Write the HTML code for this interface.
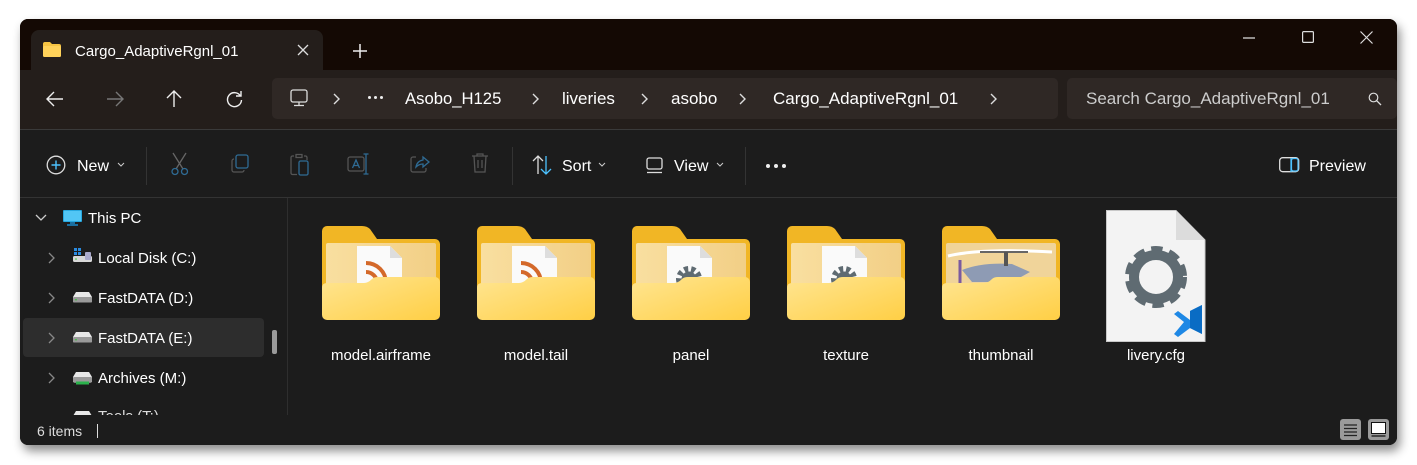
<!DOCTYPE html>
<html><head><meta charset="utf-8"><style>
*{margin:0;padding:0;box-sizing:border-box}
body{width:1417px;height:465px;background:#fff;position:relative;overflow:hidden;font-family:"Segoe UI","Liberation Sans",sans-serif;color:#fff}
.a{position:absolute}
.win{left:20px;top:19px;width:1377px;height:426px;background:#1c1c1c;border-radius:8px;overflow:hidden;box-shadow:3px 6px 10px rgba(0,0,0,.45)}
.t{font-size:16px;white-space:nowrap}
.sb{font-size:15px}
.lbl{font-size:15px;color:#fff;width:150px;text-align:center}
svg{display:block}
.dot{position:absolute;width:4px;height:4px;border-radius:2px;background:#eee}
</style></head><body>
<div class="a win">
 <div class="a" style="left:0;top:0;width:1377px;height:51px;background:#140904"></div>
 <div class="a" style="left:11px;top:11px;width:292px;height:40px;background:#241e1b;border-radius:8px 8px 0 0"></div>
 <svg class="a" style="left:23px;top:23px" width="18" height="15"><path d="M0 2a2 2 0 0 1 2-2h5l2 2h7a2 2 0 0 1 2 2v9a2 2 0 0 1-2 2H2a2 2 0 0 1-2-2z" fill="#f6c443"/><rect x="0" y="4" width="18" height="11" rx="1.5" fill="#ffd25a"/></svg>
 <div class="a t" style="left:55px;top:24px;font-size:15px">Cargo_AdaptiveRgnl_01</div>
 <svg class="a" style="left:277px;top:25px" width="12" height="12"><path d="M1 1L11 11M11 1L1 11" stroke="#ddd" stroke-width="1.3"/></svg>
 <svg class="a" style="left:333px;top:25px" width="14" height="14"><path d="M7 0V14M0 7H14" stroke="#eee" stroke-width="1.5"/></svg>
 <svg class="a" style="left:1223px;top:18px" width="12" height="2"><path d="M0 1H12" stroke="#ddd" stroke-width="1.2"/></svg>
 <svg class="a" style="left:1282px;top:12px" width="12" height="12"><rect x=".6" y=".6" width="10.8" height="10.8" rx="1" fill="none" stroke="#ddd" stroke-width="1.2"/></svg>
 <svg class="a" style="left:1340px;top:12px" width="13" height="13"><path d="M.5 .5L12.5 12.5M12.5 .5L.5 12.5" stroke="#ddd" stroke-width="1.2"/></svg>
 <div class="a" style="left:0;top:51px;width:1377px;height:59px;background:#241e1b"></div>
 <svg class="a" style="left:26px;top:72px" width="18" height="16"><path d="M17 8H1M8 1L1 8L8 15" stroke="#eee" stroke-width="1.4" fill="none"/></svg>
 <svg class="a" style="left:86px;top:72px" width="18" height="16"><path d="M1 8H17M10 1L17 8L10 15" stroke="#777" stroke-width="1.4" fill="none"/></svg>
 <svg class="a" style="left:146px;top:71px" width="16" height="18"><path d="M8 17V1M1 8L8 1L15 8" stroke="#eee" stroke-width="1.4" fill="none"/></svg>
 <svg class="a" style="left:206px;top:71px" width="17" height="18"><path d="M14.5 6A7 7 0 1 0 15.5 10M15 1V6H10" stroke="#eee" stroke-width="1.4" fill="none"/></svg>
 <div class="a" style="left:252px;top:59px;width:786px;height:41px;background:#2f2825;border-radius:5px"></div>
 <svg class="a" style="left:270px;top:70px" width="18" height="18"><rect x="1" y="1" width="16" height="12" rx="2" fill="none" stroke="#ddd" stroke-width="1.3"/><path d="M9 13V16M4 16.5H14" stroke="#ddd" stroke-width="1.3"/></svg>
 <svg class="a" style="left:313px;top:74px" width="8" height="12"><path d="M1 1L6 6L1 11" stroke="#ddd" stroke-width="1.4" fill="none"/></svg>
 <div class="dot" style="left:348px;top:77px;width:3px;height:3px"></div><div class="dot" style="left:354px;top:77px;width:3px;height:3px"></div><div class="dot" style="left:360px;top:77px;width:3px;height:3px"></div>
 <div class="a t" style="left:385px;top:70px;font-size:17px;transform:scale(.98,1);transform-origin:left">Asobo_H125</div>
 <svg class="a" style="left:512px;top:74px" width="8" height="12"><path d="M1 1L6 6L1 11" stroke="#ddd" stroke-width="1.4" fill="none"/></svg>
 <div class="a t" style="left:542px;top:70px;font-size:17px">liveries</div>
 <svg class="a" style="left:621px;top:74px" width="8" height="12"><path d="M1 1L6 6L1 11" stroke="#ddd" stroke-width="1.4" fill="none"/></svg>
 <div class="a t" style="left:651px;top:70px;font-size:17px">asobo</div>
 <svg class="a" style="left:719px;top:74px" width="8" height="12"><path d="M1 1L6 6L1 11" stroke="#ddd" stroke-width="1.4" fill="none"/></svg>
 <div class="a t" style="left:753px;top:70px;font-size:17px">Cargo_AdaptiveRgnl_01</div>
 <svg class="a" style="left:970px;top:74px" width="8" height="12"><path d="M1 1L6 6L1 11" stroke="#ddd" stroke-width="1.4" fill="none"/></svg>
 <div class="a" style="left:1047px;top:59px;width:330px;height:41px;background:#2f2825;border-radius:5px"></div>
 <div class="a t" style="left:1066px;top:70px;color:#ccc;font-size:17px">Search Cargo_AdaptiveRgnl_01</div>
 <svg class="a" style="left:1348px;top:73px" width="14" height="14"><circle cx="5.5" cy="5.5" r="4.3" fill="none" stroke="#ddd" stroke-width="1.2"/><path d="M8.7 8.7L13 13" stroke="#ddd" stroke-width="1.3"/></svg>
 <div class="a" style="left:0;top:110px;width:1377px;height:1px;background:#3a3a3a"></div>
 <svg class="a" style="left:26px;top:136px" width="20" height="20"><circle cx="10" cy="10" r="8.8" fill="none" stroke="#ddd" stroke-width="1.3"/><path d="M10 5.5V14.5M5.5 10H14.5" stroke="#4cc2ff" stroke-width="1.4"/></svg>
 <div class="a t" style="left:57px;top:139px;font-size:16px">New</div>
 <svg class="a" style="left:97px;top:143px" width="8" height="5"><path d="M1 1L4 4L7 1" stroke="#ccc" stroke-width="1" fill="none"/></svg>
 <div class="a" style="left:126px;top:128px;width:1px;height:38px;background:#333"></div>
 <svg class="a" style="left:150px;top:133px" width="20" height="24"><path d="M3 1L13 17M16 1L6 17" stroke="#666" stroke-width="1.3"/><circle cx="5" cy="19.5" r="3" fill="none" stroke="#2f6b94" stroke-width="1.3"/><circle cx="14.5" cy="19.5" r="3" fill="none" stroke="#2f6b94" stroke-width="1.3"/></svg>
 <svg class="a" style="left:210px;top:135px" width="20" height="20"><rect x="6" y="1" width="12" height="13" rx="2" fill="none" stroke="#2f6b94" stroke-width="1.3"/><path d="M4 5A2 2 0 0 0 2 7V16A2 2 0 0 0 4 18H12A2 2 0 0 0 14 16" stroke="#555" stroke-width="1.3" fill="none"/></svg>
 <svg class="a" style="left:270px;top:134px" width="20" height="23"><path d="M4 3H2.5A1.5 1.5 0 0 0 1 4.5V20A1.5 1.5 0 0 0 2.5 21.5H7M14 3H15.5A1.5 1.5 0 0 1 17 4.5V7M6 1.5H12V4.5H6Z" stroke="#555" stroke-width="1.3" fill="none"/><rect x="9" y="8" width="9" height="14" rx="1.5" fill="none" stroke="#2f6b94" stroke-width="1.3"/></svg>
 <svg class="a" style="left:327px;top:134px" width="24" height="22"><rect x="1" y="4" width="16" height="14" rx="2" fill="none" stroke="#555" stroke-width="1.3"/><path d="M5.5 15L9 7L12.5 15M6.8 12.5H11.2" stroke="#2f6b94" stroke-width="1.3" fill="none"/><path d="M19 1V21M16.5 1H21.5M16.5 21H21.5" stroke="#2f6b94" stroke-width="1.3"/></svg>
 <svg class="a" style="left:389px;top:134px" width="22" height="21"><path d="M7 4H4A2 2 0 0 0 2 6V17A2 2 0 0 0 4 19H15A2 2 0 0 0 17 17V15" stroke="#555" stroke-width="1.3" fill="none"/><path d="M7 14Q8 8 14 7V4L20 9L14 14V11Q10 11 7 14Z" stroke="#2f6b94" stroke-width="1.3" fill="none"/></svg>
 <svg class="a" style="left:451px;top:133px" width="18" height="22"><path d="M1 4H17M6 4V2H12V4M3 4L4 20H14L15 4M7 8V16M11 8V16" stroke="#555" stroke-width="1.3" fill="none"/></svg>
 <div class="a" style="left:492px;top:128px;width:1px;height:38px;background:#333"></div>
 <svg class="a" style="left:512px;top:136px" width="20" height="20"><path d="M6 19V1M1 6L6 1L11 6" stroke="#ddd" stroke-width="1.3" fill="none"/><path d="M14 1V19M9 14L14 19L19 14" stroke="#4cc2ff" stroke-width="1.3" fill="none"/></svg>
 <div class="a t" style="left:542px;top:139px">Sort</div>
 <svg class="a" style="left:578px;top:143px" width="8" height="5"><path d="M1 1L4 4L7 1" stroke="#ccc" stroke-width="1" fill="none"/></svg>
 <svg class="a" style="left:626px;top:138px" width="18" height="17"><rect x="1" y="1" width="15" height="11" rx="2" fill="none" stroke="#ddd" stroke-width="1.3"/><path d="M1 15.5H16" stroke="#ddd" stroke-width="1.3"/></svg>
 <div class="a t" style="left:654px;top:139px">View</div>
 <svg class="a" style="left:696px;top:143px" width="8" height="5"><path d="M1 1L4 4L7 1" stroke="#ccc" stroke-width="1" fill="none"/></svg>
 <div class="a" style="left:725px;top:128px;width:1px;height:38px;background:#333"></div>
 <div class="dot" style="left:746px;top:145px"></div><div class="dot" style="left:754px;top:145px"></div><div class="dot" style="left:762px;top:145px"></div>
 <svg class="a" style="left:1259px;top:138px" width="21" height="16"><rect x=".7" y=".7" width="19" height="14" rx="3" fill="none" stroke="#ddd" stroke-width="1.3"/><path d="M12 1V15" stroke="#4cc2ff" stroke-width="1.3"/><rect x="12.5" y="1.5" width="6.5" height="12.5" rx="2" fill="none" stroke="#4cc2ff" stroke-width="1.2"/></svg>
 <div class="a t" style="left:1289px;top:139px">Preview</div>
 <div class="a" style="left:0;top:178px;width:1377px;height:1px;background:#333"></div>
 <div class="a" style="left:267px;top:179px;width:1px;height:217px;background:#2e2e2e"></div>
 <svg class="a" style="left:15px;top:195px" width="12" height="8"><path d="M1 1L6 6L11 1" stroke="#ccc" stroke-width="1.3" fill="none"/></svg>
 <svg class="a" style="left:43px;top:191px" width="19" height="16"><rect x="0" y="0" width="19" height="12" rx="1" fill="#27a8e0"/><rect x="1" y="1" width="17" height="10" fill="#52c6f5"/><rect x="7" y="12" width="5" height="2" fill="#1a6fa0"/><rect x="4" y="14" width="11" height="2" fill="#1a6fa0"/></svg>
 <div class="a t sb" style="left:68px;top:191px">This PC</div>
 <div class="a" style="left:3px;top:299px;width:241px;height:39px;background:#2d2d2d;border-radius:4px"></div>
 <div class="a" style="left:252px;top:311px;width:5px;height:24px;background:#9a9a9a;border-radius:2px"></div>
 <svg class="a" style="left:28px;top:233px" width="8" height="12"><path d="M1 1L6 6L1 11" stroke="#888" stroke-width="1.3" fill="none"/></svg>
 <svg class="a" style="left:28px;top:273px" width="8" height="12"><path d="M1 1L6 6L1 11" stroke="#888" stroke-width="1.3" fill="none"/></svg>
 <svg class="a" style="left:28px;top:313px" width="8" height="12"><path d="M1 1L6 6L1 11" stroke="#888" stroke-width="1.3" fill="none"/></svg>
 <svg class="a" style="left:28px;top:353px" width="8" height="12"><path d="M1 1L6 6L1 11" stroke="#888" stroke-width="1.3" fill="none"/></svg>
 <svg class="a" style="left:53px;top:229px" width="20" height="16"><rect x="1" y="0" width="3" height="3" fill="#2a8be0"/><rect x="5" y="0" width="3" height="3" fill="#2a8be0"/><rect x="1" y="4" width="3" height="3" fill="#2a8be0"/><rect x="5" y="4" width="3" height="3" fill="#2a8be0"/><rect x="0" y="8" width="19" height="6" rx="1.5" fill="#d8d8d8"/><circle cx="3" cy="11" r=".8" fill="#3c3"/><rect x="12" y="4" width="6" height="8" rx="1" fill="#aac"/></svg>
 <div class="a t sb" style="left:78px;top:231px">Local Disk (C:)</div>
 <svg class="a" style="left:53px;top:272px" width="20" height="12"><path d="M3 1H16L19 6V10A1.5 1.5 0 0 1 17.5 11.5H1.5A1.5 1.5 0 0 1 0 10V6Z" fill="#e8e8e8"/><rect x="0" y="6" width="19" height="5.5" rx="1" fill="#9a9a9a"/><circle cx="3" cy="8.7" r=".8" fill="#3c3"/></svg>
 <div class="a t sb" style="left:78px;top:271px">FastDATA (D:)</div>
 <svg class="a" style="left:53px;top:312px" width="20" height="12"><path d="M3 1H16L19 6V10A1.5 1.5 0 0 1 17.5 11.5H1.5A1.5 1.5 0 0 1 0 10V6Z" fill="#e8e8e8"/><rect x="0" y="6" width="19" height="5.5" rx="1" fill="#9a9a9a"/><circle cx="3" cy="8.7" r=".8" fill="#3c3"/></svg>
 <div class="a t sb" style="left:78px;top:311px">FastDATA (E:)</div>
 <svg class="a" style="left:53px;top:352px" width="20" height="14"><path d="M3 1H16L19 6V10A1.5 1.5 0 0 1 17.5 11.5H1.5A1.5 1.5 0 0 1 0 10V6Z" fill="#e8e8e8"/><rect x="0" y="6" width="19" height="5" rx="1" fill="#9a9a9a"/><rect x="3" y="10.5" width="13" height="3" fill="#2bb24c"/></svg>
 <div class="a t sb" style="left:78px;top:351px">Archives (M:)</div>
 <div class="a t sb" style="left:78px;top:389px;color:#ddd">Tools (T:)</div>
 <svg class="a" style="left:53px;top:391px" width="20" height="12"><path d="M3 1H16L19 6V10H0V6Z" fill="#e8e8e8"/></svg>
 <div class="a" style="left:0;top:396px;width:1377px;height:30px;background:#1c1c1c"></div>
 <div class="a t" style="left:17px;top:404px;font-size:14px;color:#ddd">6 items</div>
 <div class="a" style="left:77px;top:405px;width:1px;height:14px;background:#ddd"></div>
 <svg class="a" style="left:1320px;top:400px" width="21" height="21"><rect width="21" height="21" rx="3" fill="#9a9a9a"/><path d="M4 6H17M4 9.5H17M4 13H17M4 16.5H17" stroke="#222" stroke-width="1.3"/></svg>
 <svg class="a" style="left:1348px;top:400px" width="21" height="21"><rect width="21" height="21" rx="3" fill="#9a9a9a"/><rect x="3.5" y="3.5" width="14" height="11" fill="#fff" stroke="#111" stroke-width="1"/><path d="M3.5 17H17.5" stroke="#111" stroke-width="1.2"/></svg>
</div>

<svg width="0" height="0" style="position:absolute"><defs>
<linearGradient id="gb" x1="0" y1="0" x2="1" y2="0"><stop offset="0" stop-color="#f9dfa0"/><stop offset="1" stop-color="#f2cf86"/></linearGradient>
<linearGradient id="gf" x1="0" y1="0" x2="1" y2="1"><stop offset="0" stop-color="#ffe591"/><stop offset="1" stop-color="#ffcf45"/></linearGradient>
</defs></svg>

<div class="a" style="left:322px;top:226px">
<svg width="118" height="94"><path d="M0 5A5 5 0 0 1 5 0H40Q45 0 48 3L55 13H113A5 5 0 0 1 118 18V89H0Z" fill="#f1b625"/><rect x="4" y="17" width="110" height="45" rx="2" fill="url(#gb)"/><path d="M35 20H68L80 32V60H35Z" fill="#fafafa"/><path d="M68 20V32H80" fill="#ddd"/><path d="M44 46A11 11 0 0 1 55 57" stroke="#d4692a" stroke-width="4" fill="none"/><path d="M44 37A20 20 0 0 1 64 57" stroke="#d4692a" stroke-width="4" fill="none"/><path d="M0 62Q0 57 5 57H42Q46 57 50 53Q52 51 56 51H113A5 5 0 0 1 118 56V89A5 5 0 0 1 113 94H5A5 5 0 0 1 0 89Z" fill="url(#gf)"/></svg></div>
<div class="a" style="left:477px;top:226px">
<svg width="118" height="94"><path d="M0 5A5 5 0 0 1 5 0H40Q45 0 48 3L55 13H113A5 5 0 0 1 118 18V89H0Z" fill="#f1b625"/><rect x="4" y="17" width="110" height="45" rx="2" fill="url(#gb)"/><path d="M35 20H68L80 32V60H35Z" fill="#fafafa"/><path d="M68 20V32H80" fill="#ddd"/><path d="M44 46A11 11 0 0 1 55 57" stroke="#d4692a" stroke-width="4" fill="none"/><path d="M44 37A20 20 0 0 1 64 57" stroke="#d4692a" stroke-width="4" fill="none"/><path d="M0 62Q0 57 5 57H42Q46 57 50 53Q52 51 56 51H113A5 5 0 0 1 118 56V89A5 5 0 0 1 113 94H5A5 5 0 0 1 0 89Z" fill="url(#gf)"/></svg></div>
<div class="a" style="left:632px;top:226px">
<svg width="118" height="94"><path d="M0 5A5 5 0 0 1 5 0H40Q45 0 48 3L55 13H113A5 5 0 0 1 118 18V89H0Z" fill="#f1b625"/><rect x="4" y="17" width="110" height="45" rx="2" fill="url(#gb)"/><path d="M35 20H68L80 32V60H35Z" fill="#fafafa"/><path d="M68 20V32H80" fill="#ddd"/><circle cx="57" cy="53" r="10" fill="none" stroke="#5f6b72" stroke-width="6" stroke-dasharray="4 3"/><circle cx="57" cy="53" r="7.5" fill="#5f6b72"/><path d="M0 62Q0 57 5 57H42Q46 57 50 53Q52 51 56 51H113A5 5 0 0 1 118 56V89A5 5 0 0 1 113 94H5A5 5 0 0 1 0 89Z" fill="url(#gf)"/></svg></div>
<div class="a" style="left:787px;top:226px">
<svg width="118" height="94"><path d="M0 5A5 5 0 0 1 5 0H40Q45 0 48 3L55 13H113A5 5 0 0 1 118 18V89H0Z" fill="#f1b625"/><rect x="4" y="17" width="110" height="45" rx="2" fill="url(#gb)"/><path d="M35 20H68L80 32V60H35Z" fill="#fafafa"/><path d="M68 20V32H80" fill="#ddd"/><circle cx="57" cy="53" r="10" fill="none" stroke="#5f6b72" stroke-width="6" stroke-dasharray="4 3"/><circle cx="57" cy="53" r="7.5" fill="#5f6b72"/><path d="M0 62Q0 57 5 57H42Q46 57 50 53Q52 51 56 51H113A5 5 0 0 1 118 56V89A5 5 0 0 1 113 94H5A5 5 0 0 1 0 89Z" fill="url(#gf)"/></svg></div>
<div class="a" style="left:942px;top:226px">
<svg width="118" height="94"><path d="M0 5A5 5 0 0 1 5 0H40Q45 0 48 3L55 13H113A5 5 0 0 1 118 18V89H0Z" fill="#f1b625"/><rect x="4" y="17" width="110" height="45" rx="2" fill="#f0d49a"/><path d="M6 30Q40 22 110 26" stroke="#fff" stroke-width="3" fill="none"/><path d="M20 44Q40 36 70 38L88 46L70 56H30Z" fill="#8e9bb4"/><path d="M38 26H86" stroke="#666" stroke-width="2"/><rect x="62" y="26" width="4" height="14" fill="#555"/><path d="M18 34V58" stroke="#7a5aa0" stroke-width="3"/><path d="M0 62Q0 57 5 57H42Q46 57 50 53Q52 51 56 51H113A5 5 0 0 1 118 56V89A5 5 0 0 1 113 94H5A5 5 0 0 1 0 89Z" fill="url(#gf)"/></svg></div>
<div class="a" style="left:1106px;top:210px">
<svg width="100" height="132"><path d="M.5 .5H70L99 30V131.5H.5Z" fill="#f3f3f3" stroke="#c8c8c8"/><path d="M70 .5V30H99" fill="#dcdcdc"/><g transform="translate(50,67)"><circle r="25" fill="none" stroke="#5f6b72" stroke-width="12" stroke-dasharray="10 6.2"/><circle r="22" fill="none" stroke="#5f6b72" stroke-width="10"/><circle r="10" fill="#f3f3f3"/></g><path d="M84 101L96 95V124L84 118L72 127L68 124L78 112L68 104L72 101L84 110Z" fill="#1e88e5"/><path d="M84 101L96 95V124L84 118V110Z" fill="#0a6cc4"/></svg></div>

<div class="a lbl" style="left:306px;top:347px">model.airframe</div>
<div class="a lbl" style="left:461px;top:347px">model.tail</div>
<div class="a lbl" style="left:616px;top:347px">panel</div>
<div class="a lbl" style="left:771px;top:347px">texture</div>
<div class="a lbl" style="left:926px;top:347px">thumbnail</div>
<div class="a lbl" style="left:1081px;top:347px">livery.cfg</div>
</body></html>
